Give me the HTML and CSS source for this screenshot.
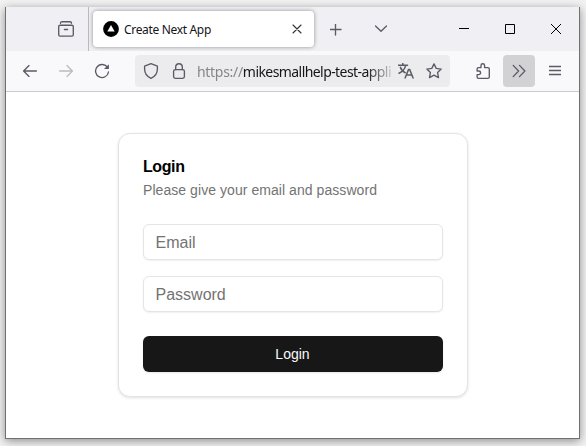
FILE: index.html
```html
<!DOCTYPE html>
<html lang="en">
<head>
<meta charset="utf-8">
<title>Create Next App</title>
<link rel="stylesheet" href="styles.css">
</head>
<body>
<div class="window">
  <header class="tabs">
    <div class="recent">
      <svg class="icon" viewBox="0 0 16 16"><path d="M2.5 2.2C2.5 1.1 3.2.7 4.1.7h7.8c.9 0 1.6.4 1.6 1.5"/><rect x=".7" y="4.2" width="14.6" height="10.9" rx="1.4"/><path d="M6.4 8.5h3.2"/></svg>
    </div>
    <div class="tab">
      <svg class="favicon" viewBox="0 0 16 16"><circle cx="8" cy="8" r="7.9" fill="#000"/><path d="M8 3.9l3.7 6.7H4.3z" fill="#fff"/></svg>
      <span class="tab-title">Create Next App</span>
      <svg class="close" viewBox="0 0 10 10"><path d="M1 1l8 8M9 1L1 9"/></svg>
    </div>
    <svg class="plus" viewBox="0 0 12 12"><path d="M5.5 0v11M0 5.5h11"/></svg>
    <svg class="chevron" viewBox="0 0 12 8"><path d="M.5 1L6 6.3 11.5 1"/></svg>
    <div class="controls">
      <svg viewBox="0 0 10 10"><path d="M0 4.5h10"/></svg>
      <svg viewBox="0 0 10 10"><path d="M.5.5h9v9h-9z"/></svg>
      <svg viewBox="0 0 10 10"><path d="M0 0l10 10M10 0L0 10"/></svg>
    </div>
  </header>
  <nav class="toolbar">
    <div class="history">
      <svg class="icon" viewBox="0 0 16 16"><path d="M14.4 8H1.8M7 2.6L1.6 8 7 13.4"/></svg>
      <svg class="icon disabled" viewBox="0 0 16 16"><path d="M1.6 8h12.6M9 2.6L14.4 8 9 13.4"/></svg>
      <svg class="icon" viewBox="0 0 16 16"><path d="M13.6 4.6A6.5 6.5 0 1 0 14.5 9"/><path d="M14.9 1.2v4.9H10z" fill="#5b5b66" stroke="none"/></svg>
    </div>
    <div class="address">
      <svg class="icon" viewBox="0 0 16 16"><path d="M8 .7l6.4 2.5v2.5c0 4.7-2.3 7.8-6.4 9.6C3.9 13.5 1.6 10.4 1.6 5.7V3.2z"/></svg>
      <svg class="icon lock" viewBox="0 0 16 16"><rect x="2.6" y="6.6" width="10.8" height="8.7" rx="1.7"/><path d="M4.7 6.5V4a3.3 3.3 0 0 1 6.6 0v2.5"/></svg>
      <div class="url"><span class="scheme">https://</span><span class="host">mikesmallhelp-test-appli</span></div>
      <svg class="icon translate" viewBox="0 0 16 16"><path d="M.3 2.2h9.2M4.8.3v2M7.7 2.4C6.8 6 4 9 1 10.2M2.4 4.4c1 2.5 2.8 4.5 4.8 5.3"/><path d="M7.1 15l3.5-8.6h1l3.5 8.6M8.4 12.1h5.4"/></svg>
      <svg class="icon" viewBox="0 0 16 16"><path d="M8 .9l2.2 4.5 5 .7-3.6 3.5.9 5L8 12.2l-4.5 2.4.9-5L.8 6.1l5-.7z"/></svg>
    </div>
    <svg class="icon puzzle" viewBox="0 0 16 16"><path d="M6 4.6V2.5a1.8 1.8 0 0 1 3.6 0v2.1h3.2c.9 0 1.5.5 1.5 1.4v7.9c0 .9-.6 1.4-1.5 1.4H3.5c-.9 0-1.4-.5-1.4-1.4v-2.3h1.7a1.8 1.8 0 0 0 0-3.6H2.1V6c0-.9.5-1.4 1.4-1.4z"/></svg>
    <div class="overflow"><svg class="icon" viewBox="0 0 16 16"><path d="M2.2 2.4L7.6 8l-5.4 5.6M8.5 2.4L13.9 8l-5.4 5.6"/></svg></div>
    <svg class="menu" viewBox="0 0 12 12"><path d="M0 1.5h12M0 5.5h12M0 9.5h12"/></svg>
  </nav>
  <main class="page">
    <form class="card">
      <h1>Login</h1>
      <p>Please give your email and password</p>
      <input type="email" placeholder="Email">
      <input type="password" placeholder="Password">
      <button type="button">Login</button>
    </form>
  </main>
</div>
</body>
</html>
```
FILE: styles.css
```css
* { box-sizing: border-box; }
body {
  margin: 0;
  height: 446px;
  padding: 7px 6px 7px 5px;
  overflow: hidden;
  background: #f2f2f2;
  font-family: "Liberation Sans", Arial, sans-serif;
}
svg {
  display: block;
  flex: none;
  fill: none;
  stroke: #5b5b66;
  stroke-width: 1.35;
  stroke-linecap: round;
  stroke-linejoin: round;
}
.icon { width: 16px; height: 16px; }
.window {
  width: 575px;
  height: 432px;
  display: flex;
  flex-direction: column;
  border: 1px solid #707070;
  border-top: 0;
  background: #fff;
  box-shadow: 0 2px 9px rgba(0, 0, 0, .42);
}
.tabs {
  display: flex;
  align-items: center;
  height: 44px;
  background: #f0eff4;
}
.recent {
  width: 83px;
  height: 44px;
  padding: 14px 0 0 52px;
  border-right: 1px solid #b9b9bf;
}
.tab {
  display: flex;
  align-items: center;
  width: 221px;
  height: 36px;
  margin-left: 4px;
  padding: 0 12px 0 10px;
  border-radius: 4px;
  background: #fff;
  box-shadow: 0 0 4px rgba(0, 0, 0, .4);
}
.favicon { width: 16px; height: 16px; stroke: none; }
.tab-title {
  flex: 1;
  margin-left: 5px;
  padding-top: 2px;
  color: #15141a;
  font: 12px/16px "Noto Sans", sans-serif;
  letter-spacing: -.33px;
  white-space: nowrap;
}
.close { width: 10px; height: 10px; stroke: #333; stroke-width: 1.1; }
.plus { width: 12px; height: 12px; margin: 1px 0 0 16px; }
.chevron { width: 12px; height: 8px; margin-left: 33px; }
.controls { display: flex; gap: 36px; margin-left: 72px; }
.controls svg {
  width: 10px;
  height: 10px;
  stroke: #000;
  stroke-width: 1;
  stroke-linecap: butt;
  stroke-linejoin: miter;
}
.toolbar {
  display: flex;
  align-items: center;
  height: 41px;
  padding-bottom: 1px;
  border-bottom: 1px solid #ccccd0;
  background: #f9f9fb;
}
.history { display: flex; gap: 20px; margin-left: 16px; }
.disabled { stroke: #bbbbc0; }
.address {
  display: flex;
  align-items: center;
  width: 315px;
  height: 32px;
  margin-left: 25px;
  padding-left: 8px;
  border-radius: 4px;
  background: #ececee;
}
.lock { margin-left: 12px; }
.url {
  width: 197px;
  margin-left: 10px;
  padding-top: 2px;
  white-space: nowrap;
  font: 14px/20px "Noto Sans", sans-serif;
  letter-spacing: -.3px;
  -webkit-mask-image: linear-gradient(to right, #000 86%, transparent 101%);
  mask-image: linear-gradient(to right, #000 86%, transparent 101%);
}
.scheme { color: #85858c; }
.host { color: #15141a; letter-spacing: -.57px; }
.translate { margin: 0 12px 0 4px; stroke-width: 1.5; }
.puzzle { margin-left: 25px; }
.overflow {
  display: flex;
  align-items: center;
  justify-content: center;
  width: 32px;
  height: 32px;
  margin-left: 12px;
  border-radius: 4px;
  background: #d2d2d4;
}
.menu { width: 12px; height: 12px; margin-left: 14px; }
.page { padding: 41px 0 0 112px; }
.card {
  display: flex;
  flex-direction: column;
  width: 350px;
  height: 264px;
  padding: 24px;
  border: 1px solid #e4e4e4;
  border-radius: 12px;
  background: #fff;
  box-shadow: 0 1px 3px rgba(0, 0, 0, .12);
}
h1 {
  margin: 0;
  padding-top: 1px;
  color: #000;
  font-size: 16px;
  line-height: 16px;
  letter-spacing: -.4px;
}
p {
  margin: 5px 0 24px;
  color: #737373;
  font-size: 14px;
  line-height: 20px;
  letter-spacing: .06px;
}
input {
  width: 300px;
  height: 36px;
  margin: 0 0 16px;
  padding: 5px 12px 3px 11.5px;
  border: 1px solid #e5e5e5;
  border-radius: 6px;
  background: #fff;
  box-shadow: 0 1px 2px rgba(0, 0, 0, .06);
  font: 16px "Liberation Sans", Arial, sans-serif;
}
input::placeholder { color: #737373; }
button {
  width: 300px;
  height: 36px;
  margin-top: 8px;
  padding: 0 7px 0 6px;
  border: 0;
  border-radius: 6px;
  background: #171717;
  color: #fafafa;
  box-shadow: 0 1px 2px rgba(0, 0, 0, .1);
  font: 14px "Liberation Sans", Arial, sans-serif;
}
```
